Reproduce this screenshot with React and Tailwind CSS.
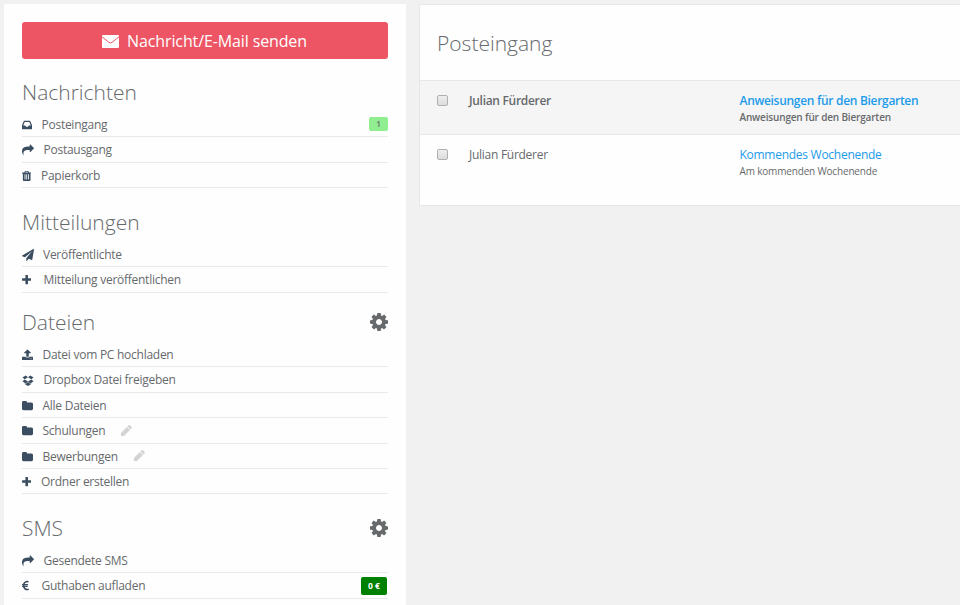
// Font Awesome 4 outlines, drawn on the 1792 grid
const paths = {
  inbox:
    "M1151 960h316q-1-3-2.500-8t-2.500-8l-212-496h-708l-212 496q-1 2-2.500 8t-2.500 8h316l95 192h320zm513 30v482q0 26-19 45t-45 19h-1408q-26 0-45-19t-19-45v-482q0-62 25-123l238-552q10-25 36.500-42t52.500-17h832q26 0 52.500 17t36.500 42l238 552q25 61 25 123z",
  share:
    "M1792 640q0 26-19 45l-512 512q-19 19-45 19t-45-19-19-45v-256h-224q-98 0-175.500 6t-154 21.500-133 42.500-105.500 69.500-80 101-48.500 138.500-17.500 181q0 55 5 123 0 6 2.500 23.500t2.500 26.500q0 15-8.500 25t-23.500 10q-16 0-28-17-7-9-13-22t-13.500-30-10.500-24q-127-285-127-451 0-199 53-333 162-403 875-403h224v-256q0-26 19-45t45-19 45 19l512 512q19 19 19 45z",
  trash:
    "M704 1376v-704q0-14-9-23t-23-9h-64q-14 0-23 9t-9 23v704q0 14 9 23t23 9h64q14 0 23-9t9-23zm256 0v-704q0-14-9-23t-23-9h-64q-14 0-23 9t-9 23v704q0 14 9 23t23 9h64q14 0 23-9t9-23zm256 0v-704q0-14-9-23t-23-9h-64q-14 0-23 9t-9 23v704q0 14 9 23t23 9h64q14 0 23-9t9-23zm-544-992h448l-48-117q-7-9-17-11h-317q-10 2-17 11zm928 32v64q0 14-9 23t-23 9h-96v948q0 83-47 143.500t-113 60.500h-832q-66 0-113-58.500t-47-141.500v-952h-96q-14 0-23-9t-9-23v-64q0-14 9-23t23-9h309l70-167q15-37 54-63t79-26h320q40 0 79 26t54 63l70 167h309q14 0 23 9t9 23z",
  plane:
    "M1764 11q33 24 27 64l-256 1536q-5 29-32 45-14 8-31 8-11 0-24-5l-453-185-242 295q-18 23-49 23-13 0-22-4-19-7-30.500-23.500t-11.500-36.500v-349l864-1059-1069 925-395-162q-37-14-40-55-2-40 32-59l1664-960q15-9 32-9 20 0 36 11z",
  plus:
    "M1600 736v192q0 40-28 68t-68 28h-416v416q0 40-28 68t-68 28h-192q-40 0-68-28t-28-68v-416h-416q-40 0-68-28t-28-68v-192q0-40 28-68t68-28h416v-416q0-40 28-68t68-28h192q40 0 68 28t28 68v416h416q40 0 68 28t28 68z",
  upload:
    "M1344 1472q0-26-19-45t-45-19-45 19-19 45 19 45 45 19 45-19 19-45zm256 0q0-26-19-45t-45-19-45 19-19 45 19 45 45 19 45-19 19-45zm128-224v320q0 40-28 68t-68 28h-1472q-40 0-68-28t-28-68v-320q0-40 28-68t68-28h427q21 56 70.500 92t110.500 36h256q61 0 110.500-36t70.500-92h427q40 0 68 28t28 68zm-325-648q-17 40-59 40h-256v448q0 26-19 45t-45 19h-256q-26 0-45-19t-19-45v-448h-256q-42 0-59-40-17-39 14-69l448-448q18-19 45-19t45 19l448 448q31 30 14 69z",
  dropbox:
    "M402 829l494 305-342 285-490-319zm986 555v108l-490 293v1l-1-1-1 1v-1l-489-293v-108l147 96 342-284v-2l1 1 1-1v2l343 284zm-834-1178l342 285-494 304-338-270zm836 623l338 271-489 319-343-285zm-151-623l489 319-338 270-494-304z",
  folder:
    "M1728 608v704q0 92-66 158t-158 66h-1216q-92 0-158-66t-66-158v-960q0-92 66-158t158-66h320q92 0 158 66t66 158v32h672q92 0 158 66t66 158z",
  pencil:
    "M960 416l416 416-832 832h-416v-416zm683 96q0 53-37 90l-166 166-416-416 166-165q36-38 90-38 53 0 91 38l235 234q37 39 37 91z",
  euro:
    "M1360 1307l35 159q3 12-3 22.500t-17 14.500l-5 1q-4 2-10.500 3.500t-16 4.500-21.500 5.500-25.500 5-30 5-33.500 4.500-36.500 3-38.500 1q-234 0-409-130.500t-238-351.500h-95q-13 0-22.500-9.500t-9.500-22.500v-113q0-13 9.500-22.500t22.500-9.500h66q-2-57 1-105h-67q-14 0-23-9t-9-23v-114q0-14 9-23t23-9h98q67-210 243.500-338t400.500-128q102 0 194 23 11 3 20 15 6 11 3 24l-43 159q-3 13-14 19.500t-24 2.500l-4-1q-4-1-11.500-2.500l-17.500-3.500-22.500-3.500-26-3-29-2.500-29.500-1q-126 0-226 64t-150 176h468q16 0 25 12 10 12 7 26l-24 114q-5 26-32 26h-488q-3 37 0 105h459q15 0 25 12 9 12 6 27l-24 112q-2 11-11 18.500t-20 7.500h-387q48 117 149.500 185.500t228.500 68.500q18 0 36-1.500t33.500-3.500 29.500-4.500 24.500-5 18.500-4.500l12-3 5-2q13-5 26 2 12 7 15 21z",
  cog:
    "M1152 896q0-106-75-181t-181-75-181 75-75 181 75 181 181 75 181-75 75-181zm512-109v222q0 12-8 23t-20 13l-185 28q-19 54-39 91 35 50 107 138 10 12 10 25t-9 23q-27 37-99 108t-94 71q-12 0-26-9l-138-108q-44 23-91 38-16 136-29 186-7 28-36 28h-222q-14 0-24.500-8.500t-11.500-21.500l-28-184q-49-16-90-37l-141 107q-10 9-25 9-14 0-25-11-126-114-165-168-7-10-7-23 0-12 8-23 15-21 51-66.500t54-70.500q-27-50-41-99l-183-27q-13-2-21-12.500t-8-23.500v-222q0-12 8-23t19-13l186-28q14-46 39-92-40-57-107-138-10-12-10-24 0-10 9-23 26-36 98.500-107.500t94.500-71.500q13 0 26 10l138 107q44-23 91-38 16-136 29-186 7-28 36-28h222q14 0 24.500 8.500t11.500 21.500l28 184q49 16 90 37l142-107q9-9 24-9 13 0 25 10 129 119 165 170 7 8 7 22 0 12-8 23-15 21-51 66.500t-54 70.500q26 50 41 98l183 28q13 2 21 12.500t8 23.500z",
};

const viewBoxes = {
  inbox: "128 0 1536 1792",
  trash: "192 0 1408 1792",
  plus: "192 0 1408 1792",
  upload: "64 0 1664 1792",
  folder: "64 0 1664 1792",
  euro: "384 0 1024 1792",
  cog: "128 128 1536 1536",
};

const Icon = ({ name, className }) => (
  <svg
    viewBox={viewBoxes[name] || "0 0 1792 1792"}
    fill="currentColor"
    className={className}
  >
    <path d={paths[name]} />
  </svg>
);

const Envelope = () => (
  <svg viewBox="0 0 17 13" className="mt-px mr-[8px] h-[13px] w-[17px]">
    <rect width="17" height="13" rx="1" fill="#fff" />
    <path d="M0 1.800L7 7.400Q8.500 8.500 10 7.400L17 1.800" fill="none" stroke="#ed5565" strokeWidth="1" />
  </svg>
);

const sections = [
  {
    title: "Nachrichten",
    height: "h-[130px]",
    items: [
      { icon: "inbox", size: "w-[10px]", gap: "pl-[19.5px]", label: "Posteingang", badge: "1" },
      { icon: "share", size: "w-[12px]", gap: "pl-[21.5px]", label: "Postausgang" },
      { icon: "trash", size: "w-[9.4px]", gap: "pl-[19px]", label: "Papierkorb" },
    ],
  },
  {
    title: "Mitteilungen",
    height: "h-[100px]",
    items: [
      { icon: "plane", size: "w-[12px]", gap: "pl-[21px]", label: "Veröffentlichte" },
      { icon: "plus", size: "w-[9.4px]", gap: "pl-[21.5px]", label: "Mitteilung veröffentlichen" },
    ],
  },
  {
    title: "Dateien",
    height: "h-[206px]",
    settings: true,
    items: [
      { icon: "upload", size: "w-[11px]", gap: "pl-[20.5px]", label: "Datei vom PC hochladen" },
      { icon: "dropbox", size: "w-[12px]", gap: "pl-[21.5px]", label: "Dropbox Datei freigeben" },
      { icon: "folder", size: "w-[11px]", gap: "pl-[20.5px]", label: "Alle Dateien" },
      { icon: "folder", size: "w-[11px]", gap: "pl-[20.5px]", label: "Schulungen", edit: true },
      { icon: "folder", size: "w-[11px]", gap: "pl-[20.5px]", label: "Bewerbungen", edit: true },
      { icon: "plus", size: "w-[9.4px]", gap: "pl-[19px]", label: "Ordner erstellen" },
    ],
  },
  {
    title: "SMS",
    height: "h-[110px]",
    settings: true,
    items: [
      { icon: "share", size: "w-[12px]", gap: "pl-[21.5px]", label: "Gesendete SMS" },
      { icon: "euro", size: "w-[7px]", gap: "pl-[19.5px]", label: "Guthaben aufladen", credit: "0 €" },
    ],
  },
];

const messages = [
  {
    from: "Julian Fürderer",
    subject: "Anweisungen für den Biergarten",
    preview: "Anweisungen für den Biergarten",
    unread: true,
  },
  {
    from: "Julian Fürderer",
    subject: "Kommendes Wochenende",
    preview: "Am kommenden Wochenende",
  },
];

const MenuItem = ({ item }) => (
  <li className="flex h-[25.4px] items-center border-b border-[#e7eaec]">
    <span className="flex w-0 shrink-0 text-[#3b4d60]">
      <Icon name={item.icon} className={`${item.size} mt-[1.5px] h-[12px] shrink-0`} />
    </span>
    <span className={`${item.gap} pt-[1.5px] text-[12px] leading-[18px] tracking-[-0.26px]`}>
      {item.label}
    </span>
    {item.edit && <Icon name="pencil" className="ml-[15px] h-[13px] w-[13px] text-[#d3d3d3]" />}
    {item.badge && (
      <span className="ml-auto flex h-[14px] w-[19px] items-center justify-center rounded-[2px] bg-[#90ee90] text-[8px] font-semibold">
        {item.badge}
      </span>
    )}
    {item.credit && (
      <span className="ml-auto mr-px flex h-[18px] w-[26px] items-center justify-center rounded-[2px] bg-[#008000] pt-[2px] text-[8.5px] font-bold text-white">
        {item.credit}
      </span>
    )}
  </li>
);

const Section = ({ section }) => (
  <section className={section.height}>
    <div className="flex h-[40px] items-center justify-between">
      <h2 className="pb-px text-[21px] leading-[30px] font-light">{section.title}</h2>
      {section.settings && <Icon name="cog" className="h-[18px] w-[18px] text-[#676a6c]" />}
    </div>
    <ul>
      {section.items.map((item) => (
        <MenuItem key={item.label} item={item} />
      ))}
    </ul>
  </section>
);

const App = () => {
  return (
    <div className="flex h-[605px] w-[960px] overflow-hidden bg-[#f1f1f1] pt-[4px] pl-[4px] font-['Open_Sans',sans-serif] text-[#676a6c]">
      <aside className="h-[601px] w-[402px] shrink-0 bg-[#fefefe] px-[18px] pt-[18px]">
        <button className="flex h-[37px] w-full items-center justify-center rounded-[3px] bg-[#ed5565] pr-px text-[16px] tracking-[-0.12px] text-white">
          <Envelope />
          Nachricht/E-Mail senden
        </button>
        <div className="pt-[13px]">
          {sections.map((section) => (
            <Section key={section.title} section={section} />
          ))}
        </div>
      </aside>

      <main className="ml-[13px] h-[202px] w-[560px] shrink-0 border border-[#e7e7e7] bg-[#fefefe]">
        <h2 className="h-[75px] pt-[23px] pl-[17px] text-[21px] leading-[30px] font-light">
          Posteingang
        </h2>
        {messages.map((message) => (
          <div
            key={message.subject}
            className={`flex h-[54px] border-t border-[#e7e7e7] pt-[10px] pl-[17px] ${
              message.unread
                ? "bg-[#f5f5f5] font-semibold tracking-[-0.3px]"
                : "tracking-[-0.27px]"
            }`}
          >
            <input
              type="checkbox"
              className="mt-[4px] h-[11px] w-[11px] shrink-0 appearance-none rounded-[2px] border border-[#b0b0b0] bg-linear-to-b from-[#eeeeee] to-[#dcdcdc]"
            />
            <div className="w-[291.5px] shrink-0 pl-[21px] text-[12px] leading-[19px]">
              {message.from}
            </div>
            <div>
              <a href="#" className="block text-[12px] leading-[19px] text-[#1c9bea]">
                {message.subject}
              </a>
              <p className="text-[10px] leading-[14px] tracking-[-0.17px]">{message.preview}</p>
            </div>
          </div>
        ))}
      </main>
    </div>
  );
};

export default App;
